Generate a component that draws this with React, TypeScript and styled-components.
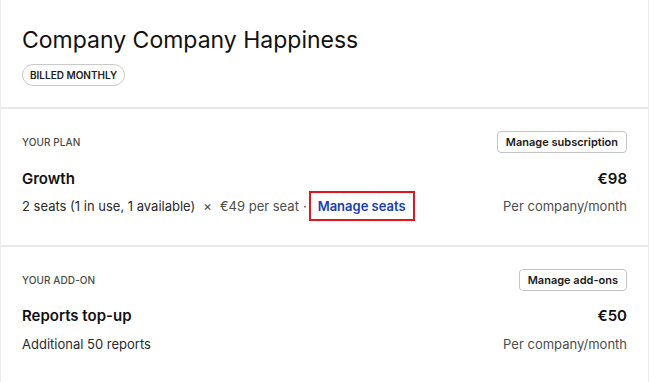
import React from "react";
import styled, { createGlobalStyle } from "styled-components";

const GlobalStyle = createGlobalStyle`
  html, body { margin: 0; padding: 0; background: #ffffff; }
  body { font-family: Inter, "Noto Sans", Arial, sans-serif; color: #1a1a1a; -webkit-font-smoothing: antialiased; }
  * { box-sizing: border-box; }
`;

const Card = styled.div`
  width: 649px;
  min-height: 382px;
  border-left: 1px solid #ececec;
  border-right: 1px solid #ececec;
  background: #fff;
`;

const Header = styled.header`
  padding: 25px 21px 21px 21px;
  border-bottom: 2px solid #e9e9e9;
  display: flex;
  flex-direction: column;
  align-items: flex-start;
  gap: 9px;
`;

const Title = styled.h1`
  margin: 0;
  font-size: 23px;
  line-height: 30px;
  font-weight: 400;
  color: #111;
`;

const Badge = styled.span`
  display: inline-flex;
  align-items: center;
  height: 22px;
  padding: 0 7px;
  border: 1px solid #c9c9c9;
  border-radius: 11px;
  font-size: 10px;
  font-weight: 600;
  color: #222;
  text-transform: uppercase;
`;

const Section = styled.section<{ $divider?: boolean }>`
  padding: 22px 21px 24px 21px;
  border-bottom: ${(p) => (p.$divider ? "2px solid #e9e9e9" : "none")};
  display: flex;
  flex-direction: column;
`;

const Row = styled.div<{ $mt?: number }>`
  display: flex;
  align-items: center;
  justify-content: space-between;
  margin-top: ${(p) => p.$mt ?? 0}px;
`;

const Eyebrow = styled.span`
  font-size: 10px;
  font-weight: 500;
  color: #4a4a4a;
  text-transform: uppercase;
  letter-spacing: 0.1px;
`;

const Button = styled.button`
  height: 22px;
  padding: 0 8px;
  background: #fff;
  border: 1px solid #c4c4c4;
  border-radius: 4px;
  font-family: inherit;
  font-size: 11px;
  font-weight: 600;
  color: #1a1a1a;
  cursor: pointer;
`;

const Name = styled.span`
  font-size: 15px;
  line-height: 20px;
  font-weight: 600;
  color: #111;
`;

const Detail = styled.span`
  font-size: 13px;
  line-height: 20px;
  color: #2a2a2a;
  display: inline-flex;
  align-items: center;
`;

const Muted = styled.span`
  color: #4d4d4d;
`;

const Sep = styled.span<{ $tight?: boolean }>`
  margin: ${(p) => (p.$tight ? "0 2px 0 4px" : "0 8px")};
  color: #444;
`;

const Link = styled.a`
  display: inline-flex;
  align-items: center;
  height: 30px;
  padding: 0 7px;
  border: 2px solid #e5141b;
  color: #1a3cb2;
  font-weight: 600;
  text-decoration: none;
`;

const Per = styled.span`
  font-size: 13px;
  line-height: 20px;
  color: #4d4d4d;
`;

export default function App() {
  return (
    <>
      <GlobalStyle />
      <Card>
        <Header>
          <Title>Company Company Happiness</Title>
          <Badge>Billed monthly</Badge>
        </Header>
        <Section $divider>
          <Row>
            <Eyebrow>Your plan</Eyebrow>
            <Button>Manage subscription</Button>
          </Row>
          <Row $mt={16}>
            <Name>Growth</Name>
            <Name>€98</Name>
          </Row>
          <Row $mt={2}>
            <Detail>
              2 seats (1 in use, 1 available)
              <Sep>×</Sep>
              <Muted>€49 per seat</Muted>
              <Sep $tight>·</Sep>
              <Link href="#">Manage seats</Link>
            </Detail>
            <Per>Per company/month</Per>
          </Row>
        </Section>
        <Section>
          <Row>
            <Eyebrow>Your add-on</Eyebrow>
            <Button>Manage add-ons</Button>
          </Row>
          <Row $mt={15}>
            <Name>Reports top-up</Name>
            <Name>€50</Name>
          </Row>
          <Row $mt={8}>
            <Detail>Additional 50 reports</Detail>
            <Per>Per company/month</Per>
          </Row>
        </Section>
      </Card>
    </>
  );
}
